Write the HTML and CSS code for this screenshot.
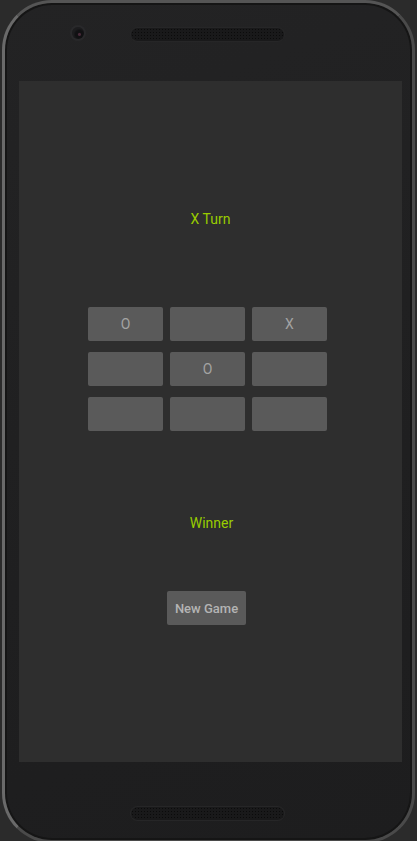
FILE: index.html
```html
<!DOCTYPE html>
<html>
<head>
<meta charset="utf-8">
<link rel="stylesheet" href="styles.css">
</head>
<body>
<div class="phone">
  <div class="top-bar">
    <span class="camera"></span>
    <span class="grille"></span>
  </div>
  <main class="screen">
    <p class="status turn">X Turn</p>
    <div class="board">
      <button class="cell">O</button>
      <button class="cell"></button>
      <button class="cell">X</button>
      <button class="cell"></button>
      <button class="cell">O</button>
      <button class="cell"></button>
      <button class="cell"></button>
      <button class="cell"></button>
      <button class="cell"></button>
    </div>
    <p class="status winner">Winner</p>
    <button class="new-game">New Game</button>
  </main>
  <div class="bottom-bar">
    <span class="grille"></span>
  </div>
</div>
</body>
</html>
```

FILE: styles.css
```css
html, body {
  margin: 0;
  padding: 0;
}
body {
  background: #2b2b2b;
  width: 417px;
  height: 841px;
  overflow: hidden;
  font-family: Roboto, "Noto Sans", sans-serif;
}
.phone {
  box-sizing: border-box;
  margin-left: 2px;
  width: 413px;
  height: 843px;
  border: 3px solid #4a4a4a;
  border-left-color: #6a6a6a;
  border-top-color: #555;
  border-radius: 50px;
  background: linear-gradient(160deg, #232324 0%, #1f1f20 60%, #1d1d1e 100%);
  box-shadow: inset 0 0 0 2px #151515;
  display: flex;
  flex-direction: column;
}
.top-bar {
  height: 78px;
  position: relative;
  display: flex;
  justify-content: center;
}
.camera {
  position: absolute;
  left: 67px;
  top: 24px;
  width: 12px;
  height: 12px;
  border-radius: 50%;
  background: radial-gradient(circle at 62% 62%, #4a2a3a 0 1px, #111113 2px 4px, #1c1c1e 6px);
  box-shadow: 0 0 0 2px #29292b;
}
.grille {
  display: block;
  width: 153px;
  height: 13px;
  border-radius: 7px;
  background-color: #19191a;
  background-image: radial-gradient(circle, #0b0b0b 0.7px, transparent 1px);
  background-size: 3px 3px;
  box-shadow: 0 0 0 1px #262627;
}
.top-bar .grille {
  margin-top: 25px;
  margin-left: -3px;
}
.screen {
  box-sizing: border-box;
  margin-left: 14px;
  width: 383px;
  height: 681px;
  background: #2e2e2e;
  display: flex;
  flex-direction: column;
  align-items: center;
}
.status {
  margin: 0;
  font-size: 14px;
  line-height: 20px;
  color: #99cc00;
}
.turn {
  margin-top: 128px;
}
.board {
  margin-top: 78px;
  margin-right: 6px;
  display: grid;
  grid-template-columns: repeat(3, 75px);
  grid-auto-rows: 34px;
  column-gap: 7px;
  row-gap: 11px;
}
.cell {
  border: none;
  border-radius: 2px;
  background: #5a5a5a;
  color: #a3a3a3;
  font-family: Roboto, "Noto Sans", sans-serif;
  font-size: 14px;
  padding: 0;
}
.winner {
  margin-top: 82px;
  margin-left: 2px;
}
.new-game {
  margin-top: 58px;
  margin-right: 8px;
  width: 79px;
  height: 34px;
  border: none;
  border-radius: 2px;
  background: #5a5a5a;
  color: #b4b4b4;
  font-family: Roboto, "Noto Sans", sans-serif;
  font-size: 13px;
  font-weight: 500;
  padding: 0;
}
.bottom-bar {
  display: flex;
  justify-content: center;
}
.bottom-bar .grille {
  margin-top: 45px;
  margin-left: -3px;
}
```
